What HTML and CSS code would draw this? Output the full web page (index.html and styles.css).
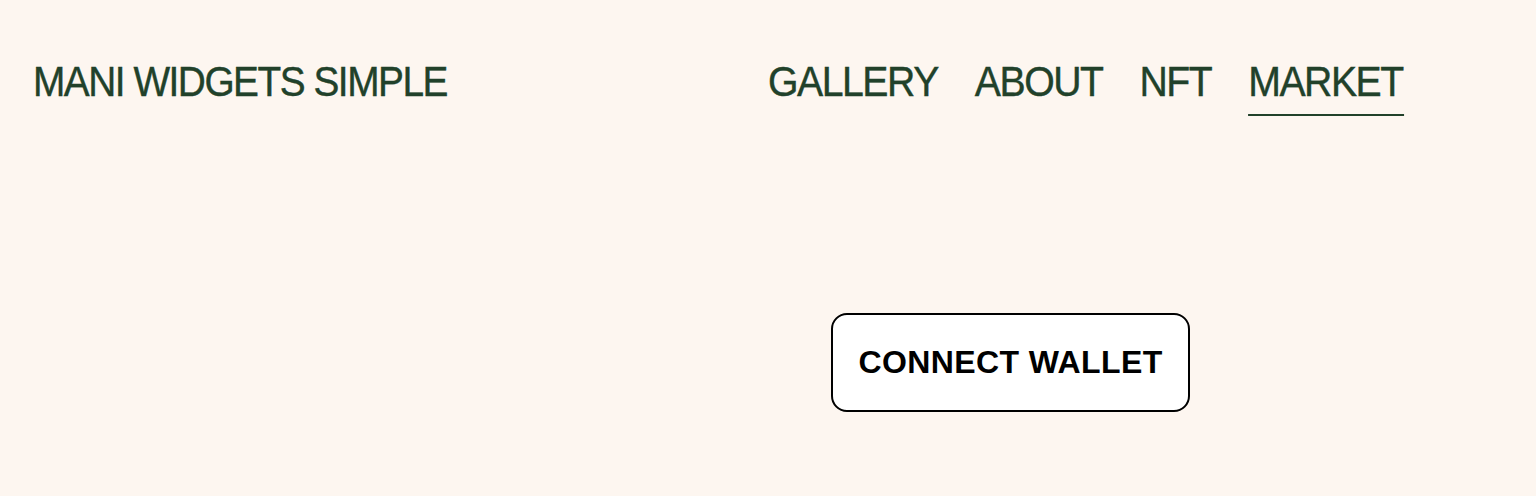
FILE: index.html
```html
<!DOCTYPE html>
<html>
<head>
<meta charset="utf-8">
<link rel="stylesheet" href="styles.css">
</head>
<body>
<header class="header">
  <div class="brand">MANI WIDGETS SIMPLE</div>
  <nav class="nav">
    <a class="nav-link">GALLERY</a>
    <a class="nav-link">ABOUT</a>
    <a class="nav-link">NFT</a>
    <a class="nav-link active">MARKET</a>
  </nav>
</header>
<main class="main">
  <div class="spacer"></div>
  <div class="actions">
    <button class="connect">CONNECT WALLET</button>
  </div>
</main>
</body>
</html>
```
FILE: styles.css
```css
html, body {
  margin: 0;
  padding: 0;
  background: #fdf6f0;
  height: 100%;
}
body {
  font-family: "Liberation Sans", Arial, sans-serif;
  color: #21412a;
}
.header {
  display: grid;
  grid-template-columns: 1fr 1fr;
  padding: 58px 34px 0;
  align-items: start;
}
.brand {
  margin-left: -1px;
  font-size: 42px;
  line-height: 48px;
  letter-spacing: -1.6px;
  -webkit-text-stroke: 0.4px #21412a;
  transform: scaleX(0.924);
  transform-origin: left top;
  white-space: nowrap;
}
.nav {
  display: flex;
  gap: 38.6px;
  transform: scaleX(0.934);
  transform-origin: left top;
}
.nav-link {
  font-size: 42px;
  line-height: 48px;
  letter-spacing: -1.6px;
  -webkit-text-stroke: 0.4px #21412a;
  padding-bottom: 8px;
  padding-right: 1px;
  border-bottom: 2px solid transparent;
}
.nav-link.active {
  border-bottom-color: #21412a;
}
.main {
  display: grid;
  grid-template-columns: 1fr 1fr;
  padding: 0 34px;
  margin-top: 197px;
}
.actions {
  padding-left: 63px;
}
.connect {
  width: 359px;
  height: 99px;
  background: #ffffff;
  border: 2px solid #000000;
  border-radius: 16px;
  font-family: "Liberation Sans", Arial, sans-serif;
  font-weight: bold;
  font-size: 32px;
  letter-spacing: 0.4px;
  color: #000000;
  cursor: pointer;
  padding: 0;
}
```
